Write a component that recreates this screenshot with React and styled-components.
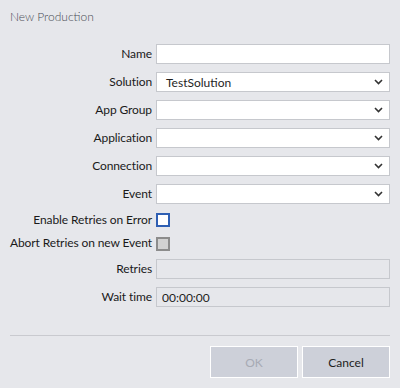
import styled, { createGlobalStyle } from "styled-components";

const GlobalStyle = createGlobalStyle`
  html, body {
    margin: 0;
    padding: 0;
    background: #e6e7eb;
  }
  body {
    font-family: Lato, "Noto Sans", sans-serif;
    font-size: 12px;
    color: #1e1e1e;
  }
`;

const Dialog = styled.div`
  width: 400px;
  height: 388px;
  box-sizing: border-box;
  padding: 10px 10px 0 10px;
  display: flex;
  flex-direction: column;
`;

const Title = styled.div`
  height: 14px;
  line-height: 14px;
  font-size: 12px;
  font-weight: 300;
  color: #4a4e55;
  margin-bottom: 16px;
`;

const Form = styled.div`
  display: flex;
  flex-direction: column;
`;

const Row = styled.div`
  display: grid;
  grid-template-columns: 142px 234px;
  column-gap: 4px;
  align-items: center;
  height: ${(p) => p.$h || 28}px;
`;

const Label = styled.label`
  text-align: right;
  white-space: nowrap;
  direction: rtl;
  letter-spacing: -0.1px;
  color: #1a1a1a;
  line-height: 14px;
  margin-top: -1px;
`;

const Input = styled.input`
  box-sizing: border-box;
  width: 234px;
  height: 20px;
  margin: 0;
  padding: 0 5px;
  border: 1px solid #c6c8cd;
  background: ${(p) => (p.disabled ? "#e6e7eb" : "#ffffff")};
  font-family: inherit;
  font-size: 12px;
  color: #1e1e1e;
  outline: none;
`;

const Combo = styled.div`
  box-sizing: border-box;
  width: 234px;
  height: 20px;
  padding: 0 6px 0 9px;
  border: 1px solid #c6c8cd;
  background: #ffffff;
  display: flex;
  align-items: center;
  justify-content: space-between;
`;

const ComboText = styled.span`
  font-size: 12px;
  color: #1e1e1e;
`;

const Check = styled.div`
  box-sizing: border-box;
  width: 14px;
  height: 14px;
  border: 2px solid ${(p) => (p.$disabled ? "#8c8c8c" : "#2f5fb3")};
  background: ${(p) => (p.$disabled ? "#d2d2d2" : "#ffffff")};
`;

const Separator = styled.div`
  height: 1px;
  background: #c9cacf;
  margin-top: 24px;
`;

const Buttons = styled.div`
  display: flex;
  justify-content: flex-end;
  gap: 4px;
  margin-top: 10px;
`;

const Button = styled.button`
  box-sizing: border-box;
  width: 88px;
  height: 32px;
  margin: 0;
  border: 1px solid #ffffff;
  background: #cdd0d9;
  font-family: inherit;
  font-size: 12px;
  color: ${(p) => (p.disabled ? "#a7aab4" : "#1e1e1e")};
`;

const Chevron = () => (
  <svg width="9" height="6" viewBox="0 0 9 6">
    <polyline points="1,1 4.5,4.5 8,1" fill="none" stroke="#333" strokeWidth="1.6" />
  </svg>
);

const ComboRow = ({ label, value }) => (
  <Row>
    <Label>{label}</Label>
    <Combo>
      <ComboText>{value}</ComboText>
      <Chevron />
    </Combo>
  </Row>
);

export default function App() {
  return (
    <>
      <GlobalStyle />
      <Dialog>
        <Title>New Production</Title>
        <Form>
          <Row>
            <Label>Name</Label>
            <Input defaultValue="" />
          </Row>
          <ComboRow label="Solution" value="TestSolution" />
          <ComboRow label="App Group" />
          <ComboRow label="Application" />
          <ComboRow label="Connection" />
          <ComboRow label="Event" />
          <Row $h={24}>
            <Label>Enable Retries on Error</Label>
            <Check />
          </Row>
          <Row $h={23}>
            <Label>Abort Retries on new Event</Label>
            <Check $disabled />
          </Row>
          <Row>
            <Label>Retries</Label>
            <Input disabled defaultValue="" />
          </Row>
          <Row>
            <Label>Wait time</Label>
            <Input disabled defaultValue="00:00:00" />
          </Row>
        </Form>
        <Separator />
        <Buttons>
          <Button disabled>OK</Button>
          <Button>Cancel</Button>
        </Buttons>
      </Dialog>
    </>
  );
}
